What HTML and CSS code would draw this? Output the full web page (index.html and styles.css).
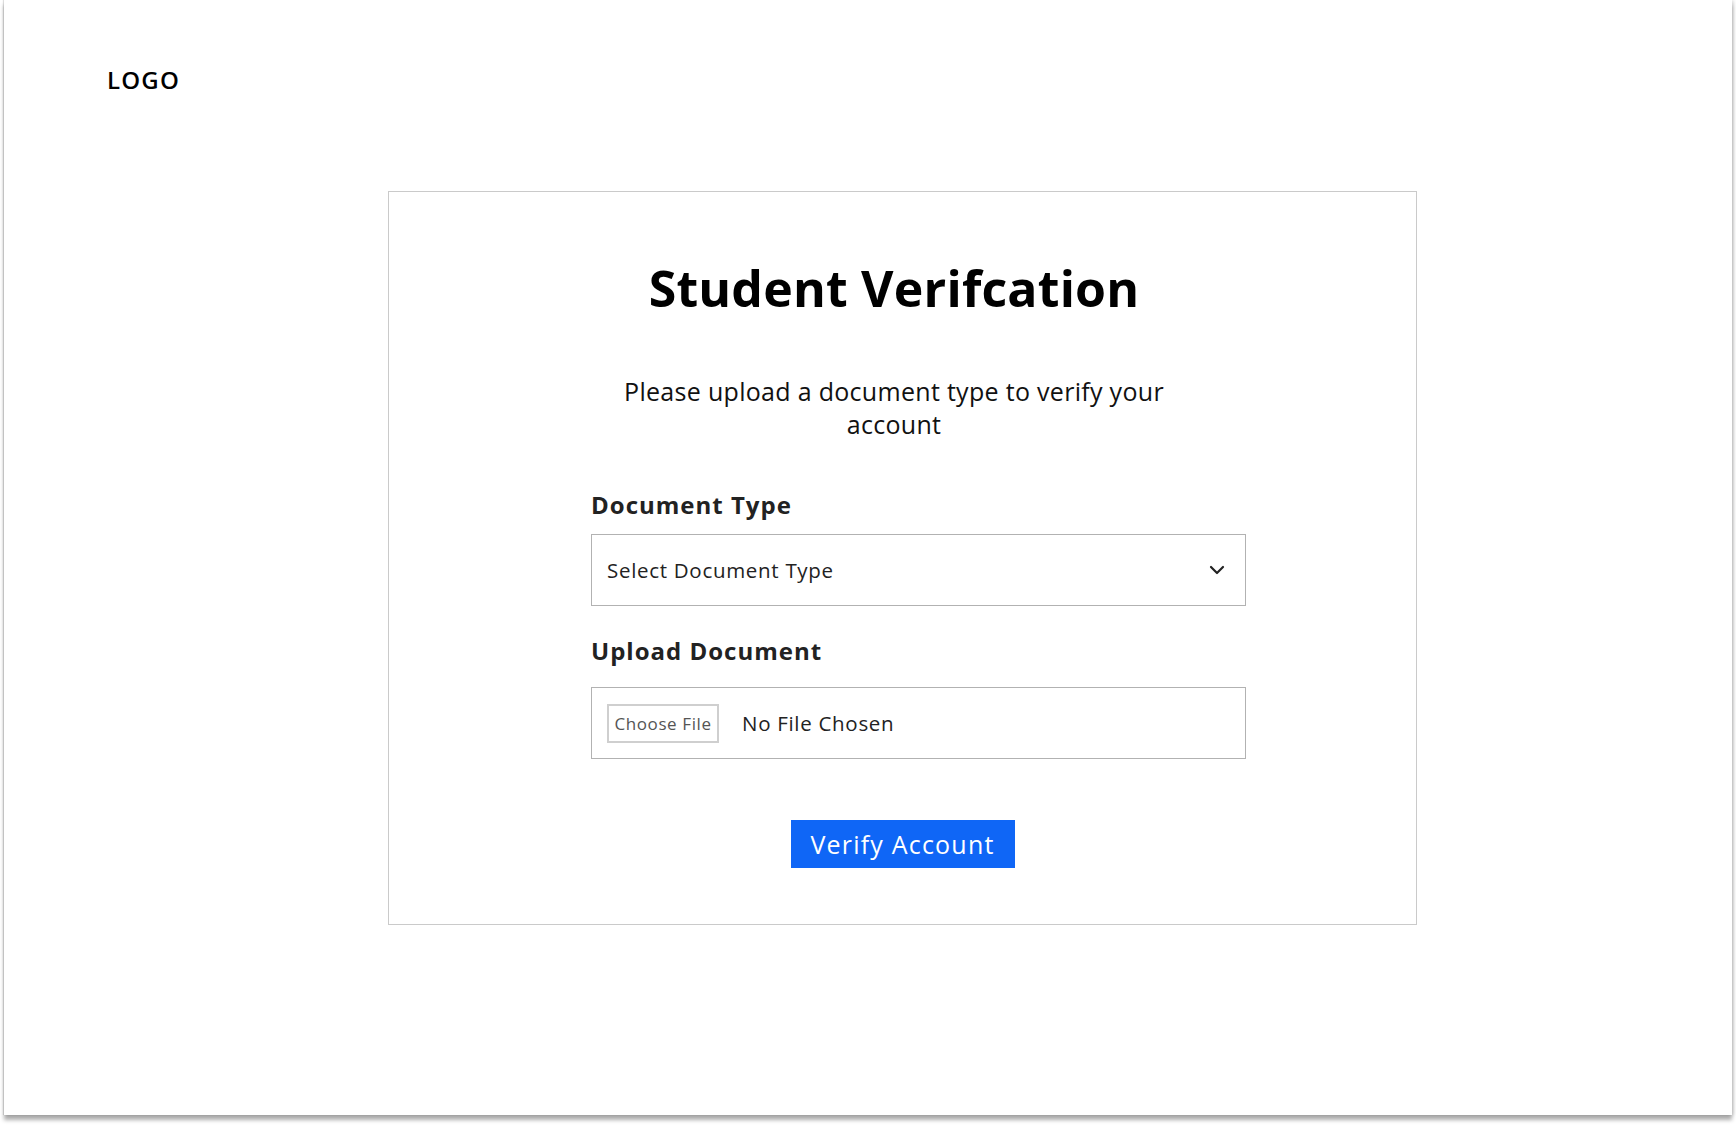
FILE: index.html
```html
<!DOCTYPE html>
<html lang="en">
<head>
<meta charset="utf-8">
<title>Student Verification</title>
<link rel="stylesheet" href="styles.css">
</head>
<body>
<div class="frame">
  <header class="logo">LOGO</header>
  <main class="card">
    <div class="intro">
      <h1 class="title">Student Verifcation</h1>
      <p class="subtitle">Please upload a document type to verify your account</p>
    </div>
    <form class="form">
      <div class="label">Document Type</div>
      <div class="select">
        <span>Select Document Type</span>
        <svg class="chev" width="16" height="10" viewBox="0 0 16 10"><path d="M2 2l6 6 6-6" fill="none" stroke="#222" stroke-width="2.2" stroke-linecap="round" stroke-linejoin="round"/></svg>
      </div>
      <div class="label label-upload">Upload Document</div>
      <div class="file">
        <span class="file-btn">Choose File</span>
        <span class="file-name">No File Chosen</span>
      </div>
      <div class="actions">
        <button type="button" class="verify">Verify Account</button>
      </div>
    </form>
  </main>
</div>
</body>
</html>
```
FILE: styles.css
```css
* { box-sizing: border-box; }
html, body { margin: 0; padding: 0; background: #fff; }
body { font-family: "Open Sans", "Liberation Sans", sans-serif; color: #111; min-height: 1125px; }

.frame {
  width: 1728px;
  height: 1115px;
  margin-left: 4px;
  background: #fff;
  box-shadow: 0 5px 4px rgba(0,0,0,0.32), 2px 0 3px rgba(0,0,0,0.12), -1px 0 1px rgba(0,0,0,0.12);
  padding: 65px 0 0 103px;
}

.logo {
  font-size: 24px;
  font-weight: 600;
  line-height: 30px;
  color: #000;
  letter-spacing: 1.2px;
}

.card {
  width: 1029px;
  height: 734px;
  margin: 96px 0 0 281px;
  border: 1px solid #cacaca;
  padding: 66px 170px 0 202px;
  display: flex;
  flex-direction: column;
}

.intro {
  display: flex;
  flex-direction: column;
  align-items: center;
  margin-right: 49px;
  text-align: center;
}

.title {
  margin: 0;
  font-size: 50px;
  line-height: 60px;
  font-weight: 700;
  color: #000;
  letter-spacing: 0.2px;
}

.subtitle {
  margin: 57px 0 0;
  max-width: 620px;
  font-size: 25px;
  line-height: 33px;
  font-weight: 400;
  color: #111;
  letter-spacing: 0.3px;
}

.form {
  display: flex;
  flex-direction: column;
  margin-top: 49px;
}

.label {
  font-size: 24px;
  line-height: 30px;
  font-weight: 700;
  color: #222;
  letter-spacing: 1px;
}

.label-upload { margin-top: 30px; }

.select {
  margin-top: 14px;
  height: 72px;
  border: 1.5px solid #b2b2b2;
  display: flex;
  align-items: center;
  justify-content: space-between;
  padding: 0 20px 0 15px;
  font-size: 20.5px;
  color: #222;
  letter-spacing: 0.7px;
}

.chev { display: block; }

.file {
  margin-top: 21px;
  height: 72px;
  border: 1.5px solid #b2b2b2;
  display: flex;
  align-items: center;
  padding: 0 0 0 15px;
}

.file-btn {
  width: 112px;
  height: 39px;
  border: 2px solid #cfcfcf;
  display: flex;
  align-items: center;
  justify-content: center;
  font-size: 17px;
  color: #555;
  letter-spacing: 0.6px;
}

.file-name {
  margin-left: 23px;
  font-size: 20.5px;
  color: #222;
  letter-spacing: 0.7px;
}

.actions {
  display: flex;
  justify-content: center;
  margin-top: 61px;
  margin-right: 32px;
}

.verify {
  width: 224px;
  height: 48px;
  border: 0;
  border-radius: 0;
  background: #0f66f6;
  color: #fff;
  font-family: "Open Sans", "Liberation Sans", sans-serif;
  font-size: 25px;
  letter-spacing: 1.2px;
  padding: 0;
  cursor: pointer;
}
```
